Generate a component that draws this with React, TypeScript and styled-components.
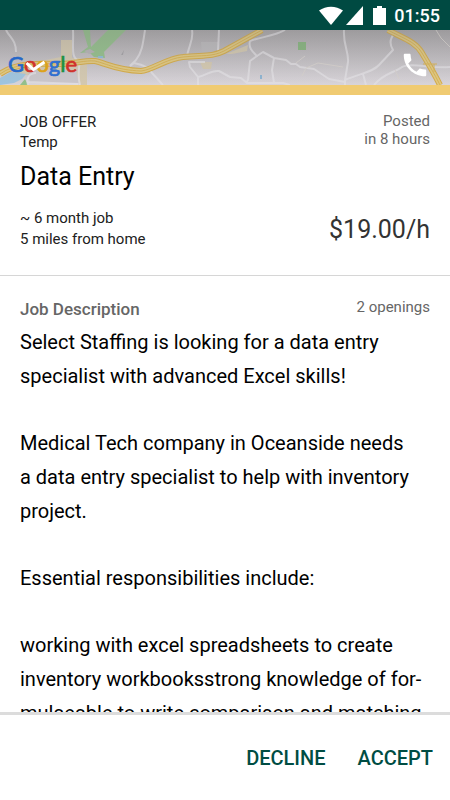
import React from "react";
import styled, { createGlobalStyle } from "styled-components";

const GlobalStyle = createGlobalStyle`
  *, *::before, *::after { box-sizing: border-box; }
  body { margin: 0; background: #fff; font-family: Roboto, "Liberation Sans", sans-serif; color: #000; }
  p, h1, h2 { margin: 0; }
`;

const Screen = styled.div`
  display: flex;
  flex-direction: column;
  height: 100vh;
  overflow: hidden;
`;

const StatusBar = styled.div`
  flex: none;
  display: flex;
  align-items: center;
  justify-content: flex-end;
  height: 30px;
  padding: 2px 10px 0 0;
  background: #004a42;
  color: #fff;
  svg { display: block; }
`;

const StatusIcons = styled.div`
  display: flex;
  align-items: center;
  gap: 3px;
  svg:last-child { margin-left: 6px; }
`;

const Clock = styled.time`
  margin-left: 8px;
  font-size: 18px;
  font-weight: 500;
  line-height: 24px;
`;

const MapHeader = styled.header`
  flex: none;
  display: grid;
  height: 65px;
  border-bottom: 10px solid #f0cb72;
  > * { grid-area: 1 / 1; }
`;

const MapDrawing = styled.svg`
  display: block;
  width: 100%;
  height: 55px;
`;

const MapControls = styled.div`
  display: flex;
  align-items: center;
  justify-content: space-between;
  padding: 14px 20px 0 8px;
`;

const Logo = styled.svg`
  display: block;
  overflow: visible;
`;

const CallButton = styled.button`
  display: block;
  padding: 0;
  border: 0;
  background: none;
  color: #fff;
  cursor: pointer;
  svg { display: block; }
`;

const Summary = styled.section`
  flex: none;
  display: flex;
  justify-content: space-between;
  padding: 17px 20px 25px;
  border-bottom: 1px solid #d6d6d6;
`;

const SummaryColumn = styled.div<{ $end?: boolean }>`
  display: flex;
  flex-direction: column;
  justify-content: space-between;
  text-align: ${(p) => (p.$end ? "right" : "left")};
`;

const Small = styled.p<{ $tone?: string; $line?: number }>`
  font-size: 15px;
  line-height: ${(p) => p.$line ?? 20}px;
  color: ${(p) => p.$tone ?? "#212121"};
`;

const Title = styled.h1`
  margin: 9px 0 15px;
  font-size: 25px;
  font-weight: 400;
  line-height: 32px;
`;

const Pay = styled.p`
  margin-bottom: 4px;
  font-size: 25px;
  line-height: 32px;
  color: #333;
`;

const Description = styled.main`
  flex: 1 1 0;
  min-height: 0;
  padding: 21px 20px 0;
  overflow: hidden;
`;

const DescriptionHead = styled.div`
  display: flex;
  justify-content: space-between;
  padding-bottom: 4px;
`;

const DescriptionTitle = styled.h2`
  font-size: 17px;
  font-weight: 500;
  line-height: 24px;
  color: #666;
`;

const Paragraph = styled.p`
  margin-bottom: 33px;
  font-size: 20px;
  line-height: 34px;
`;

const Actions = styled.footer`
  flex: none;
  display: flex;
  align-items: center;
  justify-content: flex-end;
  gap: 32px;
  height: 88px;
  padding: 0 17px;
  border-top: 3px solid #dcdcdc;
`;

const ActionButton = styled.button`
  padding: 0;
  border: 0;
  background: none;
  color: #004d43;
  font: 500 20px/32px Roboto, "Liberation Sans", sans-serif;
  cursor: pointer;
`;

const roads = [
  "M6 0C10 8 16 10 16 22",
  "M73 0C74 15 70 28 79 31C80 38 77 46 80 55",
  "M145 0C143 14 142 22 136 30L130 36",
  "M130 36L134 33C144 35 150 38 152 43L163 55",
  "M192 0C194 11 188 16 187 27",
  "M205 32L189 32L190 37L198 47L198 55M198 47C206 46 210 40 219 41L230 47L241 48L247 53L283 53L290 55",
  "M219 0L218 22",
  "M285 0C275 6 260 7 250 11C248 18 253 22 257 26L250 31L248 50L246 53",
  "M257 26L263 22L274 28L286 30L291 34L296 34L300 37L314 39L329 49L345 52M274 28L272 40L274 53",
  "M344 0C343 15 349 22 348 32L345 50L345 55M345 50C362 43 373 42 379 35L393 20C388 12 391 7 395 3M363 44L366 55M374 55C384 43 394 43 402 37C412 32 430 39 450 37",
  "M28 55C26 47 30 43 36 43M28 52L78 54",
];

const thinRoads = [
  "M302 46L306 38L318 33L343 37M296 33L305 26",
  "M436 0L441 8L450 17M395 40L399 49",
];

const highways = [
  "M0 44C15 33 38 33 60 34C74 34 85 30 95 31C108 34 116 40 141 41C152 40 168 28 183 27C203 25 212 27 224 21L262 0",
  "M388 0C402 8 415 11 422 23C429 35 434 43 440 55",
];

function WifiIcon() {
  return (
    <svg width="24" height="20" viewBox="0 0 24 20" aria-hidden="true">
      <path d="M0 4.500C7-.6 17-.6 24 4.500L12 19Z" fill="#fff" />
    </svg>
  );
}

function SignalIcon() {
  return (
    <svg width="18" height="20" viewBox="0 0 18 20" aria-hidden="true">
      <path d="M17 0V19H0Z" fill="#fff" />
    </svg>
  );
}

function BatteryIcon() {
  return (
    <svg width="13" height="20" viewBox="0 0 13 20" aria-hidden="true">
      <path d="M4 0h5v2h4v17H0V2h4z" fill="#fff" />
    </svg>
  );
}

function AreaMap() {
  return (
    <MapDrawing viewBox="0 0 450 55" preserveAspectRatio="xMidYMid slice" aria-hidden="true">
      <defs>
        <linearGradient id="shade" x1="0" y1="0" x2="0" y2="1">
          <stop offset="0" stopColor="#aaa7aa" />
          <stop offset="1" stopColor="#d8d4d9" />
        </linearGradient>
        <linearGradient id="veil" x1="0" y1="0" x2="0" y2="1">
          <stop offset="0" stopColor="#777" stopOpacity=".25" />
          <stop offset="1" stopColor="#999" stopOpacity="0" />
        </linearGradient>
      </defs>
      <rect width="450" height="55" fill="url(#shade)" />
      <g fill="#d3c8b0">
        <path d="M61 10h11v18h8l7 6v21h-7l-4-10H20l-8 3 8-13 41-8z" />
        <path d="M200 32h12l-1 7h-8zM226 24l22-9-1 6-15 3z" />
      </g>
      <path d="M28 40h48l3 13H30z" fill="#c9c5ca" />
      <path d="M0 48l11-6 15 2-4 5-8 4-14 2z" fill="#9fc4de" />
      <path d="M83 0h7l1 17 17-17h18l-22 22 1 6-11-1-5-5-9 1 8-6z" fill="#93bf8b" />
      <path d="M84 21l6-2 5 3-6 2z" fill="#b5b2b5" />
      <path d="M25 49l-5 6h8z" fill="#93bf8b" />
      <rect x="298" y="12" width="8" height="8" fill="#86b57e" />
      <path d="M98 26h5v2h-5z" fill="#8dbbd8" />
      <rect x="260" y="45" width="2" height="4" fill="#8db3d0" />
      <path d="M201 12h17v8h-8v3h-8z" fill="#bcbabd" />
      <path d="M124 20l-3 5h2z" fill="#a3a1a5" />
      <g fill="none" stroke="#e2e0e4" strokeWidth="2" strokeLinejoin="round" opacity=".75">
        {roads.map((d) => <path key={d} d={d} />)}
      </g>
      <g fill="none" stroke="#d5d0cd" strokeWidth="1">
        {thinRoads.map((d) => <path key={d} d={d} />)}
      </g>
      <g fill="none" stroke="#d4ab48" strokeWidth="6">
        {highways.map((d) => <path key={d} d={d} />)}
      </g>
      <g fill="none" stroke="#e0c881" strokeWidth="4">
        {highways.map((d) => <path key={d} d={d} />)}
      </g>
      <g fill="none" stroke="#d8b354" strokeWidth="1">
        {highways.map((d) => <path key={d} d={d} />)}
        <path d="M423 34h14M434 34v8" />
      </g>
      <rect width="450" height="55" fill="url(#veil)" />
    </MapDrawing>
  );
}

const logoLetters = [
  { letter: "G", color: "#2567c9" },
  { letter: "o", color: "#d0312b" },
  { letter: "o", color: "#dda21a" },
  { letter: "g", color: "#2f6fd0" },
  { letter: "l", color: "#1c9145" },
  { letter: "e", color: "#d0312b" },
];

function GoogleLogo() {
  return (
    <Logo width="70" height="36" viewBox="0 0 70 36" role="img" aria-label="Google">
      <text x="0" y="25" fontFamily="Lato, sans-serif" fontSize="22" strokeWidth=".7">
        {logoLetters.map(({ letter, color }, i) => (
          <tspan key={i} fill={color} stroke={color}>{letter}</tspan>
        ))}
      </text>
      <path d="M18.500 16L25.500 22.500L36.500 15" fill="none" stroke="#fff" strokeWidth="3" />
    </Logo>
  );
}

const paragraphs = [
  ["Select Staffing is looking for a data entry", "specialist with advanced Excel skills!"],
  ["Medical Tech company in Oceanside needs", "a data entry specialist to help with inventory", "project."],
  ["Essential responsibilities include:"],
  [
    "working with excel spreadsheets to create",
    "inventory workbooksstrong knowledge of for-",
    "mulaeable to write comparison and matching",
  ],
];

export default function App() {
  return (
    <Screen>
      <GlobalStyle />
      <StatusBar>
        <StatusIcons>
          <WifiIcon />
          <SignalIcon />
          <BatteryIcon />
        </StatusIcons>
        <Clock>01:55</Clock>
      </StatusBar>
      <MapHeader>
        <AreaMap />
        <MapControls>
          <GoogleLogo />
          <CallButton type="button" aria-label="Call">
            <svg width="30" height="30" viewBox="0 0 24 24" fill="currentColor">
              <path d="M6.620 10.790c1.440 2.830 3.760 5.140 6.590 6.590l2.200-2.200c.27-.27.67-.36 1.020-.24 1.120.37 2.330.57 3.570.57.55 0 1 .45 1 1V20c0 .55-.45 1-1 1C10.610 21 3 13.390 3 4c0-.55.45-1 1-1h3.500c.55 0 1 .45 1 1 0 1.250.2 2.450.57 3.570.11.35.03.74-.25 1.020z" />
            </svg>
          </CallButton>
        </MapControls>
      </MapHeader>
      <Summary>
        <SummaryColumn>
          <Small>JOB OFFER<br />Temp</Small>
          <Title>Data Entry</Title>
          <Small $line={21}>~ 6 month job<br />5 miles from home</Small>
        </SummaryColumn>
        <SummaryColumn $end>
          <Small $tone="#666" $line={18}>Posted<br />in 8 hours</Small>
          <Pay>$19.00/h</Pay>
        </SummaryColumn>
      </Summary>
      <Description>
        <DescriptionHead>
          <DescriptionTitle>Job Description</DescriptionTitle>
          <Small $tone="#666">2 openings</Small>
        </DescriptionHead>
        {paragraphs.map((lines) => (
          <Paragraph key={lines[0]}>
            {lines.map((line, i) => (
              <React.Fragment key={line}>
                {i > 0 && <br />}
                {line}
              </React.Fragment>
            ))}
          </Paragraph>
        ))}
      </Description>
      <Actions>
        <ActionButton type="button">DECLINE</ActionButton>
        <ActionButton type="button">ACCEPT</ActionButton>
      </Actions>
    </Screen>
  );
}
